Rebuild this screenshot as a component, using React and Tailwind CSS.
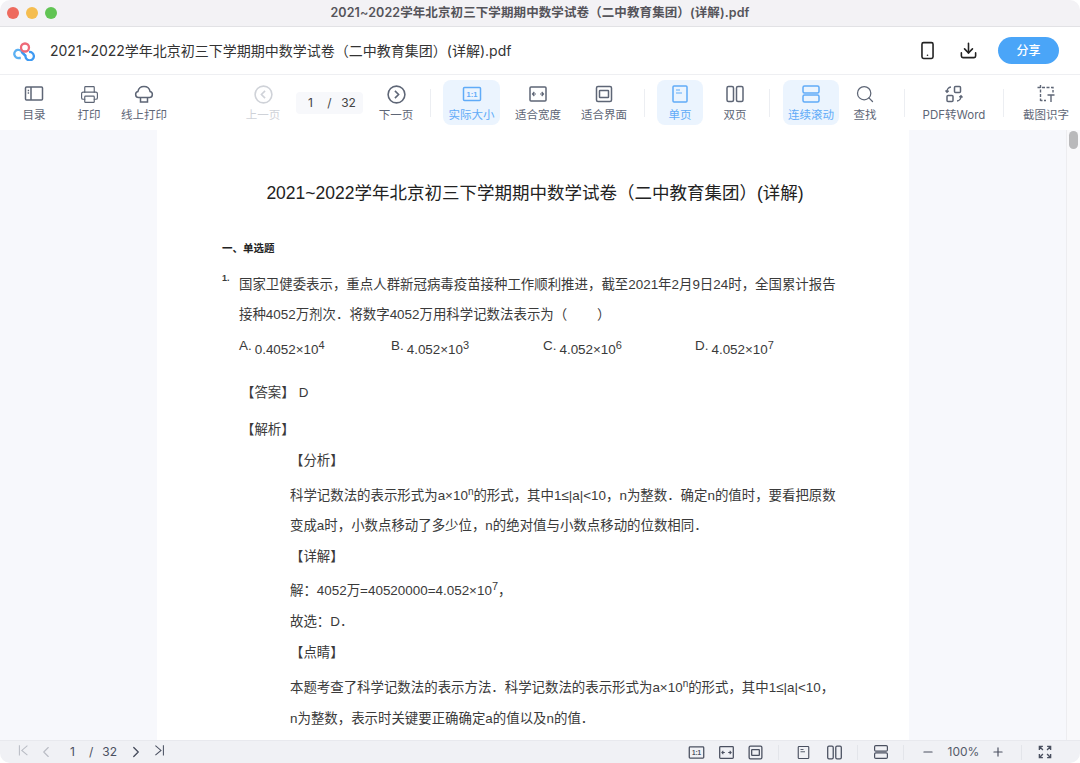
import { ChevronLeft, ChevronRight, Minus, Plus, Search, Printer, Download, Smartphone } from 'lucide-react'

const docName = '2021~2022学年北京初三下学期期中数学试卷（二中教育集团）(详解).pdf'

function Svg({ size = 20, className = '', children }) {
  return (
    <svg width={size} height={size} viewBox="0 0 20 20" fill="none" stroke="currentColor" strokeWidth="1.5" className={className}>
      {children}
    </svg>
  )
}

const IconToc = () => <Svg><rect x="1.5" y="3" width="17" height="13" rx="1" /><path d="M7 3v13M3.7 6.500h1.400M3.7 9h1.400" /></Svg>
const IconCloudPrint = () => <Svg><path d="M6.500 13.500H4.500a3 3 0 0 1-.6-5.900 6.200 6.200 0 0 1 12.200 0 3 3 0 0 1-.6 5.900H6.500v4.500h7v-4.500" /></Svg>
const IconPrevRound = () => <Svg size={21}><circle cx="10" cy="10" r="8" /><path d="M11.500 6.500 8 10l3.500 3.500" /></Svg>
const IconNextRound = () => <Svg size={21}><circle cx="10" cy="10" r="8" /><path d="M8.500 6.500 12 10l-3.500 3.500" /></Svg>
const IconActual = ({ size = 20 }) => (
  <Svg size={size}>
    <rect x="1.500" y="3.500" width="17" height="13" rx="1" />
    <text x="10" y="12.800" textAnchor="middle" fontSize="7.500" fontWeight="700" stroke="none" fill="currentColor" fontFamily="Liberation Sans">1:1</text>
  </Svg>
)
const IconFitWidth = ({ size = 20 }) => (
  <Svg size={size}>
    <rect x="2" y="3" width="16" height="14" rx="1" />
    <path d="M4.500 10H8M15.500 10H12M6.300 8 4.500 10l1.800 2M13.700 8l1.800 2-1.800 2" strokeWidth="1.200" />
  </Svg>
)
const IconFitPage = ({ size = 20 }) => <Svg size={size}><rect x="2.500" y="2.500" width="15" height="15" rx="1.500" /><rect x="5.500" y="6.500" width="9" height="7" rx=".5" /></Svg>
const IconSingle = ({ size = 20 }) => <Svg size={size}><rect x="3" y="2" width="14" height="16" rx="1" /><path d="M6 6h4M6 9h6" strokeWidth="1.200" /></Svg>
const IconDouble = ({ size = 20 }) => <Svg size={size}><rect x="2" y="2.500" width="6.500" height="15" rx="1.500" /><rect x="11.500" y="2.500" width="6.500" height="15" rx="1.500" /></Svg>
const IconScroll = ({ size = 20 }) => <Svg size={size}><rect x="2" y="2" width="16" height="7" rx="1.500" /><rect x="2" y="11" width="16" height="7" rx="1.500" /></Svg>
const IconConvert = () => (
  <Svg>
    <rect x="10.500" y="2.500" width="6" height="6" rx="1" />
    <rect x="3" y="11.500" width="6" height="6" rx="1" />
    <path d="M3 8a4.500 4.500 0 0 1 4-5M1.500 6.500 3 8.300l1.700-1.600M17 12a4.500 4.500 0 0 1-4 5M18.500 13.500 17 11.700l-1.700 1.600" strokeWidth="1.300" />
  </Svg>
)
const IconCrop = () => (
  <Svg>
    <path d="M4.500 1v16M1.500 3.500H17v5" strokeWidth="1.400" strokeDasharray="3 1.500" />
    <path d="M4.500 16.500h6" strokeWidth="1.400" strokeDasharray="2 1.500" />
    <path d="M11.500 11h7M15 11v7" strokeWidth="1.400" />
  </Svg>
)
const IconFirst = () => <Svg size={16}><path d="M3 1.500v13M13 2 6 8l7 6" strokeWidth="1.300" /></Svg>
const IconLast = () => <Svg size={16}><path d="M13 1.500v13M3 2l7 6-7 6" strokeWidth="1.300" /></Svg>
const IconExpand = () => (
  <Svg size={14}>
    <path d="M2 7V2h5M18 7V2h-5M2 13v5h5M18 13v5h-5M3 3l4 4M17 3l-4 4M3 17l4-4M17 17l-4-4" strokeWidth="2" />
  </Svg>
)

function Logo() {
  return (
    <svg width="24" height="20" viewBox="0 0 24 20" fill="none" strokeWidth="2.300">
      <path d="M12.500 14.800 9.300 11.700A4.100 4.100 0 1 0 6 17h1.800" stroke="#5cb0f2" />
      <path d="M8.500 10.800 12.500 14.800a4.200 4.200 0 1 0 3.500-3.800" stroke="#3f9af2" />
      <circle cx="12" cy="6.500" r="4" stroke="#ee6a78" />
    </svg>
  )
}

function Tool({ w, ml = '', label, active, disabled, children }) {
  return (
    <div className={`flex h-[45px] flex-col items-center justify-between rounded-lg pt-[4px] pb-[2px] ${w} ${ml} ${active ? 'bg-[#ebf4fe] text-[#60abf8]' : disabled ? 'text-[#cfd2d8]' : 'text-[#5e6676]'}`}>
      <span className="flex h-5 items-center">{children}</span>
      <span className="text-[11.500px] leading-[16px] whitespace-nowrap">{label}</span>
    </div>
  )
}

const Sep = ({ ml }) => <div className={`h-7 w-px bg-[#eceef2] ${ml}`} />
const BarSep = ({ ml }) => <div className={`h-[15px] w-px bg-[#e3e5ea] ${ml}`} />

function Option({ letter, base, exp }) {
  return (
    <div className="flex w-[152px] items-start">
      <span className="leading-[17px]">{letter}.</span>
      <span className="mt-[4px] ml-[3px] leading-[17px]">
        {base}×10<sup className="text-[11px]">{exp}</sup>
      </span>
    </div>
  )
}

export default function App() {
  return (
    <div className="flex h-[763px] w-[1080px] flex-col overflow-hidden rounded-[10px] bg-white font-['Inter','Noto_Sans_CJK_SC',sans-serif] text-[#333]">
      <div className="relative flex h-[27px] shrink-0 items-center justify-center border-b border-[#e2e2e5] bg-[#f3f2f5]">
        <div className="absolute left-[7px] flex gap-[7px]">
          <span className="h-3 w-3 rounded-full bg-[#ee6a5e]" />
          <span className="h-3 w-3 rounded-full bg-[#f5bd4f]" />
          <span className="h-3 w-3 rounded-full bg-[#61c454]" />
        </div>
        <span className="text-[12.500px] font-semibold tracking-[0.1px] text-[#55545a]">{docName}</span>
      </div>

      <div className="flex h-[48px] shrink-0 items-center border-b border-[#eeeff2] pl-[13px]">
        <Logo />
        <span className="ml-[13px] text-[14px] text-[#333]">{docName}</span>
        <div className="ml-auto flex items-center pr-[21px]">
          <Smartphone size={19} strokeWidth={2} className="text-[#222]" />
          <Download size={19} strokeWidth={2} className="ml-[22px] text-[#222]" />
          <button className="ml-[20px] h-[27px] w-[61px] rounded-full bg-[#4aa5f8] text-[12px] font-medium text-white">分享</button>
        </div>
      </div>

      <div className="flex h-[55px] shrink-0 items-center pl-[7px]">
        <Tool w="w-[54px]" label="目录"><IconToc /></Tool>
        <Tool w="w-[56px]" label="打印"><Printer size={19} strokeWidth={1.500} /></Tool>
        <Tool w="w-[54px]" label="线上打印"><IconCloudPrint /></Tool>
        <Tool w="w-[46px]" ml="ml-[69px]" label="上一页" disabled><IconPrevRound /></Tool>
        <div className="ml-[10px] grid h-[22px] w-[67px] grid-cols-3 items-center rounded bg-[#f7f8fb] px-[5px] text-center text-[12px] text-[#444]">
          <span>1</span><span>/</span><span>32</span>
        </div>
        <Tool w="w-[46px]" ml="ml-[10px]" label="下一页"><IconNextRound /></Tool>
        <Sep ml="ml-[11px]" />
        <Tool w="w-[57px]" ml="ml-[12px]" label="实际大小" active><IconActual /></Tool>
        <Tool w="w-[66px]" ml="ml-[5px]" label="适合宽度"><IconFitWidth /></Tool>
        <Tool w="w-[66px]" label="适合界面"><IconFitPage /></Tool>
        <Sep ml="ml-[7px]" />
        <Tool w="w-[46px]" ml="ml-[12px]" label="单页" active><IconSingle /></Tool>
        <Tool w="w-[46px]" ml="ml-[9px]" label="双页"><IconDouble /></Tool>
        <Sep ml="ml-[11px]" />
        <Tool w="w-[56px]" ml="ml-[13px]" label="连续滚动" active><IconScroll /></Tool>
        <Tool w="w-[46px]" ml="ml-[3px]" label="查找"><Search size={20} strokeWidth={1.500} /></Tool>
        <Sep ml="ml-[16px]" />
        <Tool w="w-[68px]" ml="ml-[15px]" label="PDF转Word"><IconConvert /></Tool>
        <Sep ml="ml-[15px]" />
        <Tool w="w-[56px]" ml="ml-[14px]" label="截图识字"><IconCrop /></Tool>
      </div>

      <div className="flex min-h-0 flex-1 bg-[#f7f8fc]">
        <div className="w-[157px] shrink-0" />
        <div className="w-[752px] shrink-0 overflow-hidden bg-white pt-[51px] font-['Liberation_Sans','Noto_Sans_CJK_SC',sans-serif] text-[13.430px] text-[#3a3a3a]">
          <h1 className="pl-[4px] text-center text-[17.500px] leading-[24px] text-[#222]">2021~2022学年北京初三下学期期中数学试卷（二中教育集团）(详解)</h1>

          <div className="mt-[36px] ml-[65px] text-[10.500px] leading-[14px] font-bold text-[#222]">一、单选题</div>

          <div className="relative mt-[15px] ml-[82px] whitespace-nowrap">
            <span className="absolute top-[2px] left-[-17px] text-[9px] font-bold">1.</span>
            <p className="leading-[30px]">国家卫健委表示，重点人群新冠病毒疫苗接种工作顺利推进，截至2021年2月9日24时，全国累计报告</p>
            <p className="leading-[30px]">接种4052万剂次．将数字4052万用科学记数法表示为（&nbsp;&nbsp;&nbsp;&nbsp;&nbsp;&nbsp;&nbsp;&nbsp;）</p>
          </div>

          <div className="mt-[7px] ml-[82px] flex">
            <Option letter="A" base="0.4052" exp="4" />
            <Option letter="B" base="4.052" exp="3" />
            <Option letter="C" base="4.052" exp="6" />
            <Option letter="D" base="4.052" exp="7" />
          </div>

          <div className="mt-[25px] ml-[84px] leading-[20px]">【答案】<span className="ml-[4px]">D</span></div>
          <div className="mt-[17px] ml-[84px] leading-[20px]">【解析】</div>

          <div className="ml-[133px] whitespace-nowrap">
            <div className="mt-[11px] leading-[20px]">【分析】</div>
            <p className="mt-[10px] leading-[30px]">科学记数法的表示形式为a×10<sup className="text-[10px]">n</sup>的形式，其中1≤|a|&lt;10，n为整数．确定n的值时，要看把原数</p>
            <p className="leading-[30px]">变成a时，小数点移动了多少位，n的绝对值与小数点移动的位数相同．</p>
            <div className="mt-[6px] leading-[20px]">【详解】</div>
            <p className="mt-[9px] leading-[30px]">解：4052万=40520000=4.052×10<sup className="text-[11px]">7</sup>，</p>
            <p className="mt-px leading-[30px]">故选：D．</p>
            <div className="mt-[6px] leading-[20px]">【点睛】</div>
            <p className="mt-[10px] leading-[30px]">本题考查了科学记数法的表示方法．科学记数法的表示形式为a×10<sup className="text-[10px]">n</sup>的形式，其中1≤|a|&lt;10，</p>
            <p className="mt-px leading-[30px]">n为整数，表示时关键要正确确定a的值以及n的值．</p>
          </div>
        </div>
        <div className="flex-1" />
        <div className="w-[14px] shrink-0 border-l border-[#ededf0] bg-[#f9f9fb] pt-px">
          <div className="ml-[2px] h-[18px] w-[9px] rounded-full bg-[#b9b9bb]" />
        </div>
      </div>

      <div className="flex h-[23px] shrink-0 items-center border-t border-[#e8e9ee] bg-[#f0f1f5] pl-[15px] text-[12px] text-[#4a5060]">
        <span className="ml-[2px] text-[#b9bcc4]"><IconFirst /></span>
        <ChevronLeft size={18} strokeWidth={1.500} className="ml-[4px] text-[#b9bcc4]" />
        <span className="ml-[15px]">1</span>
        <span className="ml-[14px]">/</span>
        <span className="ml-[9px]">32</span>
        <ChevronRight size={18} strokeWidth={1.800} className="ml-[10px]" />
        <span className="ml-[8px]"><IconLast /></span>
        <div className="ml-auto flex items-center pr-[28px]">
          <IconActual size={17} />
          <span className="ml-[13px]"><IconFitWidth size={17} /></span>
          <span className="ml-[12px]"><IconFitPage size={17} /></span>
          <BarSep ml="ml-[14px]" />
          <span className="ml-[17px]"><IconSingle size={15} /></span>
          <span className="ml-[15px]"><IconDouble size={17} /></span>
          <BarSep ml="ml-[14px]" />
          <span className="ml-[15px]"><IconScroll size={16} /></span>
          <BarSep ml="ml-[14px]" />
          <Minus size={14} strokeWidth={2} className="ml-[17px]" />
          <span className="ml-[12px] w-[33px] text-center text-[#555b69]">100%</span>
          <Plus size={14} strokeWidth={2} className="ml-[11px]" />
          <BarSep ml="ml-[16px]" />
          <span className="ml-[16px]"><IconExpand /></span>
        </div>
      </div>
    </div>
  )
}
